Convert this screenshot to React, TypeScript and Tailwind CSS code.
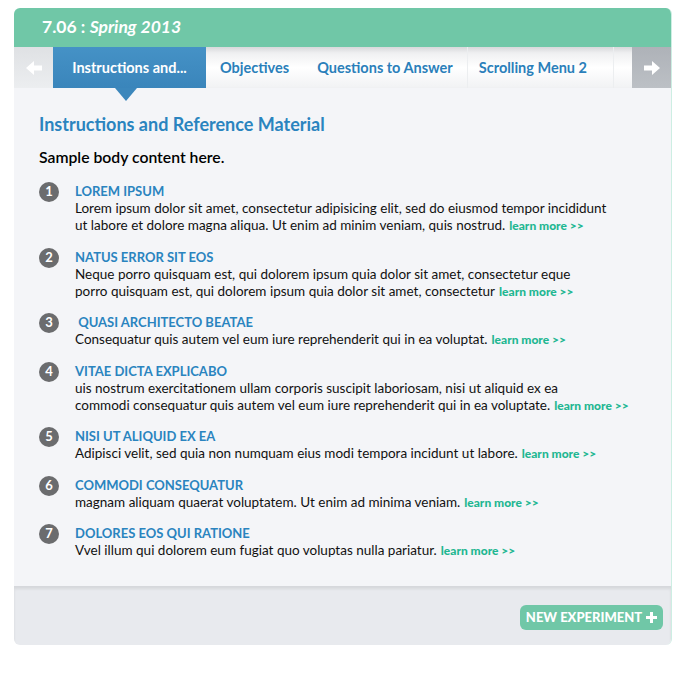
const items = [
  {
    title: "LOREM IPSUM",
    lines: [
      "Lorem ipsum dolor sit amet, consectetur adipisicing elit, sed do eiusmod tempor incididunt",
      "ut labore et dolore magna aliqua. Ut enim ad minim veniam, quis nostrud.",
    ],
  },
  {
    title: "NATUS ERROR SIT EOS",
    lines: [
      "Neque porro quisquam est, qui dolorem ipsum quia dolor sit amet, consectetur eque",
      "porro quisquam est, qui dolorem ipsum quia dolor sit amet, consectetur",
    ],
  },
  {
    title: "\u00a0QUASI ARCHITECTO BEATAE",
    lines: ["Consequatur quis autem vel eum iure reprehenderit qui in ea voluptat."],
  },
  {
    title: "VITAE DICTA EXPLICABO",
    lines: [
      "uis nostrum exercitationem ullam corporis suscipit laboriosam, nisi ut aliquid ex ea",
      "commodi consequatur quis autem vel eum iure reprehenderit qui in ea voluptate.",
    ],
  },
  {
    title: "NISI UT ALIQUID EX EA",
    lines: ["Adipisci velit, sed quia non numquam eius modi tempora incidunt ut labore."],
  },
  {
    title: "COMMODI CONSEQUATUR",
    lines: ["magnam aliquam quaerat voluptatem. Ut enim ad minima veniam."],
  },
  {
    title: "DOLORES EOS QUI RATIONE",
    lines: ["Vvel illum qui dolorem eum fugiat quo voluptas nulla pariatur."],
  },
];

function Arrow({ dir }: { dir: "left" | "right" }) {
  return (
    <svg width="16" height="14" viewBox="0 0 16 14" className={dir === "left" ? "rotate-180" : ""}>
      <path d="M0 4.5h8V0l8 7-8 7V9.5H0z" fill="#fff" />
    </svg>
  );
}

export default function App() {
  return (
    <div className="min-h-screen bg-white pt-2 pl-[14px]" style={{ fontFamily: "Lato, 'Noto Sans', sans-serif" }}>
      <div className="w-[658px] rounded-md overflow-hidden border-r border-[#cdeee3]">
        {/* HEADER */}
        <div className="h-[39px] bg-[#70c7a7] flex items-center pl-[28px] text-white text-[17.5px] font-bold">
          7.06 :&nbsp;<span className="italic">Spring 2013</span>
        </div>

        {/* NAV */}
        <div className="relative h-[41px] flex bg-gradient-to-b from-[#e9eaec] via-white to-[#f1f2f4] shadow-[inset_0_3px_4px_rgba(0,0,0,0.08)]">
          <div className="w-[39px] flex items-center justify-center bg-gradient-to-b from-[#dfe1e4] to-[#eceef0]">
            <Arrow dir="left" />
          </div>
          <div className="relative w-[153px] flex items-center justify-center bg-gradient-to-b from-[#4592c6] to-[#3a85bb] text-white text-[14.5px] font-bold">
            Instructions and...
            <div className="absolute left-[62px] top-full w-0 h-0 border-l-[11px] border-r-[11px] border-t-[13px] border-l-transparent border-r-transparent border-t-[#3c87bc] z-10" />
          </div>
          <div className="flex items-center pl-[14px] pr-[14px] text-[#2a7fba] text-[14.5px] font-bold">Objectives</div>
          <div className="flex items-center px-[14px] text-[#2a7fba] text-[14.5px] font-bold border-r border-[#eceef0]">Questions to Answer</div>
          <div className="flex items-center pl-[11px] pr-[26px] text-[#2a7fba] text-[14.5px] font-bold border-r border-[#eceef0]">Scrolling Menu 2</div>
          <div className="flex-1" />
          <div className="w-[39px] flex items-center justify-center bg-gradient-to-b from-[#aeb2b8] to-[#bcc0c5]">
            <Arrow dir="right" />
          </div>
        </div>

        {/* BODY */}
        <div className="bg-[#f4f5f8] pl-[25px] pt-[24px] pb-[27px]">
          <h1 className="text-[18px] leading-6 font-bold text-[#2a84bf]">Instructions and Reference Material</h1>
          <p className="mt-[11px] text-[15.75px] leading-5 font-semibold text-black">Sample body content here.</p>
          <ol className="mt-[16px] flex flex-col gap-[14.5px]">
            {items.map((item, i) => (
              <li key={i} className="flex">
                <div className="w-[20px] h-[20px] mt-[-1px] rounded-full bg-[#6b6c6e] text-white text-[13px] font-bold flex items-center justify-center">
                  {i + 1}
                </div>
                <div className="ml-[16px] text-[13.5px] leading-[17px]">
                  <div className="font-bold text-[#2a84bf] text-[13px]">{item.title}</div>
                  {item.lines.map((line, j) => (
                    <div key={j} className="text-[#111]">
                      {line}
                      {j === item.lines.length - 1 && (
                        <span className="ml-[4px] text-[12px] font-black text-[#1fb792]">learn more &gt;&gt;</span>
                      )}
                    </div>
                  ))}
                </div>
              </li>
            ))}
          </ol>
        </div>

        {/* FOOTER */}
        <div className="h-[59px] bg-[#e8eaee] shadow-[inset_0_3px_3px_rgba(0,0,0,0.08)] flex items-center justify-end pr-[8px] pt-[4px]">
          <button className="h-[25px] w-[143px] justify-center rounded-md bg-[#70c7a7] text-white text-[13px] font-black flex items-center gap-[4px]">
            NEW EXPERIMENT
            <svg width="11" height="11" viewBox="0 0 11 11">
              <path d="M4 0h3v4h4v3H7v4H4V7H0V4h4z" fill="#fff" />
            </svg>
          </button>
        </div>
      </div>
    </div>
  );
}
